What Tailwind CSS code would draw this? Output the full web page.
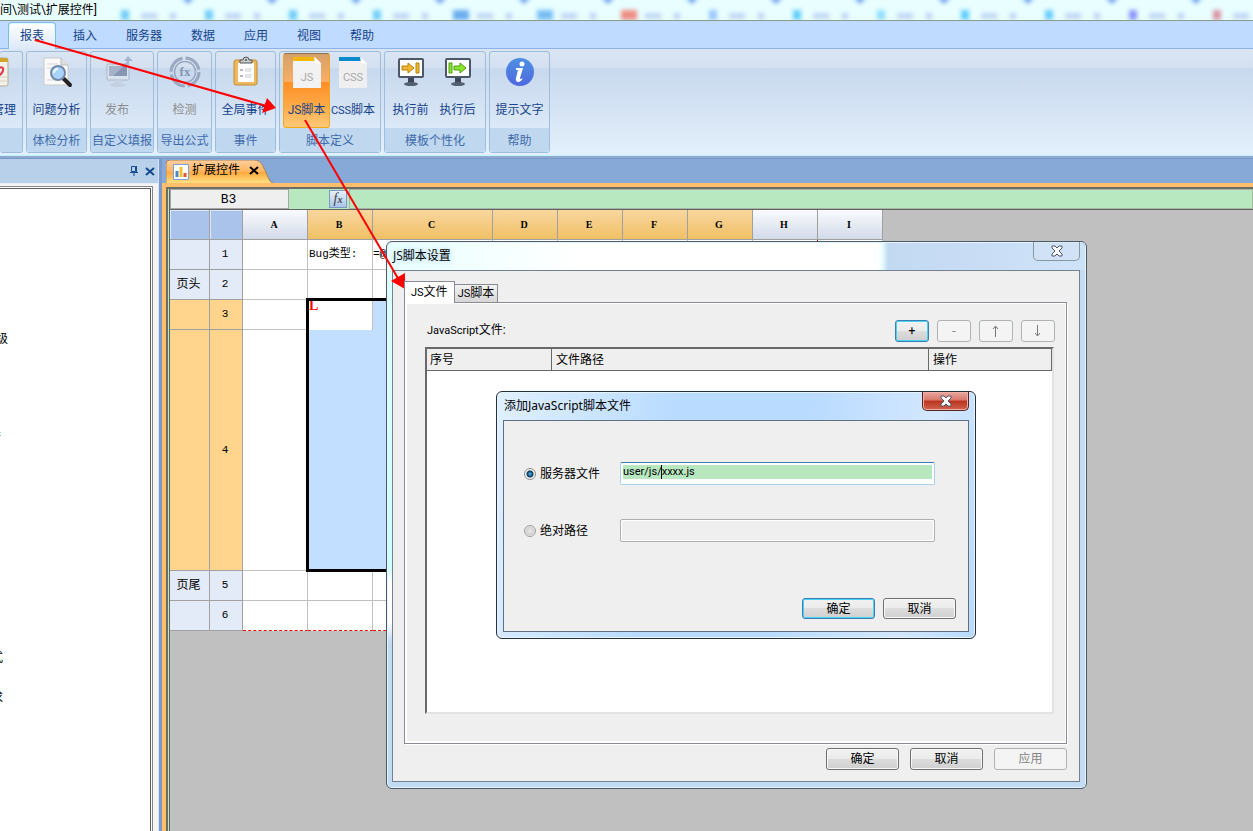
<!DOCTYPE html>
<html lang="zh-CN">
<head>
    <meta charset="UTF-8">
    <meta name="viewport" content="width=device-width, initial-scale=1.0">
    <title>扩展控件</title>
    <script src="https://cdn.jsdelivr.net/npm/@tailwindcss/browser@4"></script>
</head>
<body class="relative flex h-screen flex-col overflow-hidden bg-[#c0c0c0] font-['Roboto','Noto_Sans_CJK_SC',sans-serif] text-xs text-black">

    <!-- Title bar -->
    <header class="relative h-[21px] shrink-0 overflow-hidden border-b border-[#8a9a8c] bg-[#e8feff]">
        <svg class="absolute inset-0 h-full w-full" aria-hidden="true">
            <defs>
                <filter id="soft" x="-50%" y="-50%" width="200%" height="200%"><feGaussianBlur stdDeviation="2"/></filter>
            </defs>
            <g id="glass" filter="url(#soft)" opacity=".85"></g>
        </svg>
        <h1 class="relative leading-5">间\测试\扩展控件]</h1>
    </header>

    <!-- Menu -->
    <nav class="flex h-7 shrink-0 gap-[5px] border-b border-[#8db2e3] bg-[#bfdbff] pl-2 pt-px text-[#15428b]">
        <a href="#" class="h-7 rounded-t border border-b-0 border-[#8db2e3] bg-gradient-to-b from-white to-[#dbe8f8] px-[11px] leading-[26px] shadow-[inset_0_0_0_1px_#d5ffff]">报表</a>
        <a href="#" class="px-3 leading-7">插入</a>
        <a href="#" class="px-3 leading-7">服务器</a>
        <a href="#" class="px-3 leading-7">数据</a>
        <a href="#" class="px-3 leading-7">应用</a>
        <a href="#" class="px-3 leading-7">视图</a>
        <a href="#" class="px-3 leading-7">帮助</a>
    </nav>

    <!-- Ribbon -->
    <div class="flex h-[107px] shrink-0 gap-[3px] border-b border-[#bff4ff] bg-[linear-gradient(#dbe6f4_0,#d3e0f0_19px,#c8d8ed_19px,#e3f0fc_100%)] pb-0.5 pt-0.5 text-[#15428b]">
        <section class="flex w-[23px] flex-col overflow-hidden rounded-[3px] border border-l-0 border-[#9ebcdc]">
            <button class="flex flex-1 flex-col items-end pr-1.5">
                <svg class="mt-1 h-8 w-8" viewBox="0 0 32 32"><rect x="0" y="2" width="24" height="28" rx="2" fill="#f4f1e8" stroke="#b5ab94"/><path d="M0 2h22q2 0 2 2v2H0z" fill="#d0a52c"/><path d="M0 21h23M0 25h23" stroke="#d6d0bf"/><path d="M14 20q6-3 5-8-3-2-5 2" fill="none" stroke="#e23d50" stroke-width="2"/></svg>
                <span class="mt-3 whitespace-nowrap leading-5">管理</span>
            </button>
            <h2 class="h-6 bg-[#c0d7f0]"></h2>
        </section>
        <section class="flex w-[61px] flex-col rounded-[3px] border border-[#9ebcdc]">
            <button class="flex flex-1 flex-col items-center">
                <svg class="mt-1 h-8 w-8" viewBox="0 0 32 32"><path d="M3 2h17l7 7v20H3z" fill="#fafafa" stroke="#c8c8c8"/><path d="M20 2v7h7" fill="#dedede" stroke="#bdbdbd"/><path d="M6 8h11M6 12h7M6 24h7" stroke="#d5d5d5"/><path d="M23 23l6 6" stroke="#222" stroke-width="4" stroke-linecap="round"/><circle cx="17" cy="17" r="7" fill="#a9d3fa" stroke="#7089a8" stroke-width="2"/><path d="M13 17q0-4 4-4" fill="none" stroke="#eef8ff" stroke-width="2"/></svg>
                <span class="mt-3 leading-5">问题分析</span>
            </button>
            <h2 class="h-6 rounded-b bg-[#c0d7f0] text-center leading-[26px] text-[#3e6aaa]">体检分析</h2>
        </section>
        <section class="flex w-16 flex-col rounded-[3px] border border-[#9ebcdc]">
            <button class="flex flex-1 flex-col items-center pr-2.5 text-[#8d8d8d]" disabled>
                <svg class="ml-2.5 mt-1 h-8 w-8" viewBox="0 0 32 32"><rect x="1" y="8" width="22" height="16" rx="1" fill="#d9e2ef" stroke="#a8b6ca"/><path d="M3 10h18v10H3z" fill="#8796b3"/><path d="M3 10h15L7 20H3z" fill="#a5b3ca"/><path d="M9 24h6l1 4H8z" fill="#c6d2e2"/><ellipse cx="12" cy="29" rx="8" ry="2" fill="#c3d0e1"/><path d="M17 10q7 0 6-5h4l-5-5-4 5h3q0 3-4 3z" fill="#a5b5ce"/></svg>
                <span class="mt-3 leading-5">发布</span>
            </button>
            <h2 class="h-6 whitespace-nowrap rounded-b bg-[#c0d7f0] text-center leading-[26px] text-[#3e6aaa]">自定义填报</h2>
        </section>
        <section class="flex w-[55px] flex-col rounded-[3px] border border-[#9ebcdc]">
            <button class="flex flex-1 flex-col items-center text-[#8d8d8d]" disabled>
                <svg class="mt-1 h-8 w-8" viewBox="0 0 32 32"><g fill="none" stroke="#9aa9c0"><circle cx="16" cy="16" r="14" stroke-width="3" stroke-dasharray="19 3"/><circle cx="16" cy="16" r="10.500" stroke-width="1.500"/></g><text x="16" y="20" text-anchor="middle" font-size="13" fill="#8695b0" font-family="Liberation Serif" font-weight="bold">fx</text></svg>
                <span class="mt-3 leading-5">检测</span>
            </button>
            <h2 class="h-6 rounded-b bg-[#c0d7f0] text-center leading-[26px] text-[#3e6aaa]">导出公式</h2>
        </section>
        <section class="flex w-[61px] flex-col rounded-[3px] border border-[#9ebcdc]">
            <button class="flex flex-1 flex-col items-center">
                <svg class="mt-1 h-8 w-8" viewBox="0 0 32 32"><rect x="4" y="4" width="23" height="25" rx="2" fill="#eeb95d" stroke="#c48b33"/><path d="M8 7h16v19H8z" fill="#fff"/><path d="M10 7V4h3q0-3 3-3t3 3h3v3z" fill="#c8ccd1" stroke="#555"/><circle cx="16" cy="4" r="1" fill="#555"/><path d="M10 13h3v2h-3zM10 19h3v2h-3z" fill="#b6bac1"/><path d="M15 13h7M15 15h6M15 19h7M15 21h6" stroke="#c9ccd2"/></svg>
                <span class="mt-3 leading-5">全局事件</span>
            </button>
            <h2 class="h-6 rounded-b bg-[#c0d7f0] text-center leading-[26px] text-[#3e6aaa]">事件</h2>
        </section>
        <section class="flex w-[102px] flex-col rounded-[3px] border border-[#9ebcdc]">
            <div class="flex flex-1 px-[3px] pt-px">
                <button class="flex h-[75px] w-[47px] flex-col items-center rounded-[3px] border border-[#f5a81c] border-t-[#8d7250] bg-[linear-gradient(#d5a06b_0,#f9ae67_38%,#fd8e28_39%,#ffa945_70%,#ffc978_100%)]">
                    <svg class="mt-0.5 h-8 w-8" viewBox="0 0 32 32"><path d="M2 1h22l6 6v25H2z" fill="#f2f2f2"/><path d="M2 1h21l3 4H2z" fill="#f3b60b"/><path d="M23 1l1 6 6 1z" fill="#fff"/><text x="16" y="25" text-anchor="middle" font-size="11" fill="#aaa" font-family="Roboto">JS</text></svg>
                    <span class="mt-3 whitespace-nowrap leading-5">JS脚本</span>
                </button>
                <button class="flex h-[75px] w-[46px] flex-col items-center pt-px">
                    <svg class="mt-0.5 h-8 w-8" viewBox="0 0 32 32"><path d="M2 1h22l6 6v25H2z" fill="#efeff0"/><path d="M2 1h21l3 4H2z" fill="#078acb"/><path d="M23 1l1 6 6 1z" fill="#fff"/><text x="16" y="25" text-anchor="middle" font-size="11" fill="#aaa" font-family="Roboto">CSS</text></svg>
                    <span class="mt-3 whitespace-nowrap leading-5"><span class="text-[11px]">CSS</span>脚本</span>
                </button>
            </div>
            <h2 class="h-6 rounded-b bg-[#c0d7f0] text-center leading-[26px] text-[#3e6aaa]">脚本定义</h2>
        </section>
        <section class="flex w-[102px] flex-col rounded-[3px] border border-[#9ebcdc]">
            <div class="flex flex-1 px-0.5">
                <button class="flex w-[47px] flex-col items-center">
                    <svg class="mt-1 h-8 w-8" viewBox="0 0 32 32"><path d="M13 22h6v5h-6z" fill="#3c4657"/><ellipse cx="16" cy="28" rx="7" ry="2" fill="#536070"/><rect x="4" y="3" width="24" height="18" rx="1" fill="#fff" stroke="#4c5869" stroke-width="2"/><path d="M7 10h6V7l6 5-6 5v-3H7z" fill="#f1b62f" stroke="#b9810f"/><path d="M21 7h3v10h-3z" fill="#f1b62f" stroke="#b9810f"/></svg>
                    <span class="mt-3 leading-5">执行前</span>
                </button>
                <button class="flex w-[47px] flex-col items-center">
                    <svg class="mt-1 h-8 w-8" viewBox="0 0 32 32"><path d="M13 22h6v5h-6z" fill="#3c4657"/><ellipse cx="16" cy="28" rx="7" ry="2" fill="#536070"/><rect x="4" y="3" width="24" height="18" rx="1" fill="#fff" stroke="#4c5869" stroke-width="2"/><path d="M12 10h6V7l6 5-6 5v-3h-6z" fill="#8be52c" stroke="#4a9f10"/><path d="M7 7h3v10H7z" fill="#8be52c" stroke="#4a9f10"/></svg>
                    <span class="mt-3 leading-5">执行后</span>
                </button>
            </div>
            <h2 class="h-6 rounded-b bg-[#c0d7f0] text-center leading-[26px] text-[#3e6aaa]">模板个性化</h2>
        </section>
        <section class="flex w-[61px] flex-col rounded-[3px] border border-[#9ebcdc]">
            <button class="flex flex-1 flex-col items-center">
                <svg class="mt-1 h-8 w-8" viewBox="0 0 32 32"><defs><linearGradient id="info" x2="0" y2="1"><stop stop-color="#4e90e2"/><stop offset="1" stop-color="#4d68df"/></linearGradient></defs><circle cx="16" cy="16" r="14" fill="url(#info)"/><circle cx="18" cy="8" r="2.500" fill="#fff"/><path d="M12 12h7l-3 10q0 2 3 0-2 4-5 4-3-1-2-4l2-8h-2z" fill="#fff"/></svg>
                <span class="mt-3 leading-5">提示文字</span>
            </button>
            <h2 class="h-6 rounded-b bg-[#c0d7f0] text-center leading-[26px] text-[#3e6aaa]">帮助</h2>
        </section>
    </div>

    <div class="flex min-h-0 flex-1 border-t-2 border-[#90a9cc] bg-[#789aca] pt-px">
        <!-- Side panel -->
        <aside class="flex w-[159px] shrink-0 flex-col border-r border-[#d6e4f4] bg-[#f4f4f2] pr-0.5">
            <div class="-mr-0.5 flex h-[25px] items-center justify-end gap-1 border-b border-[#e8eef4] bg-[#b9d0ea] pr-0.5 text-[#15498d]">
                <button aria-label="固定"><svg class="h-3 w-3" viewBox="0 0 12 12" fill="none" stroke="currentColor"><path d="M3.500 1.500h4v5h-4zM8.500 1v6M2 7.500h8M6 8v3"/></svg></button>
                <button aria-label="关闭"><svg class="h-3 w-3" viewBox="0 0 12 12" fill="none" stroke="currentColor" stroke-width="2"><path d="M2 3l8 7M10 3l-8 7"/></svg></button>
            </div>
            <div class="mr-[3px] mt-0.5 flex flex-1 flex-col border-r border-t border-[#85858c] bg-white pr-px pt-px">
                <div class="flex-1 border-r border-t border-[#5d5d5d] pt-[140px] leading-5">
                    <p class="flex w-2 justify-end overflow-hidden">级</p>
                    <p class="mt-[79px] flex w-px justify-end overflow-hidden text-[#15428b]">行</p>
                    <p class="mt-[200px] flex w-[3px] justify-end overflow-hidden">式</p>
                    <p class="mt-5 flex w-[3px] justify-end overflow-hidden">求</p>
                </div>
            </div>
        </aside>

        <!-- Report editor -->
        <main class="ml-[3px] flex min-w-0 flex-1 flex-col">
            <div class="flex h-6 bg-[#86a9d8] pl-1 pt-px">
                <div class="relative flex h-[23px] w-[107px] items-center pl-[7px]">
                    <svg class="absolute inset-0 h-full w-full" viewBox="0 0 107 23" preserveAspectRatio="none" aria-hidden="true"><defs><linearGradient id="tab" x2="0" y2="1"><stop stop-color="#ffd0a0"/><stop offset=".5" stop-color="#ffb55d"/><stop offset=".51" stop-color="#ffa638"/><stop offset="1" stop-color="#ffdf82"/></linearGradient></defs><path d="M0 23V4q0-4 4-4h84q6 0 9 6l5 11q2 6 5 6z" fill="url(#tab)"/><path d="M0 23V4q0-4 4-4h84q6 0 9 6l5 11q2 6 5 6" fill="none" stroke="#ad8156"/></svg>
                    <svg class="relative h-4 w-4" viewBox="0 0 16 16"><path d="M.5.500h15v15H.5z" fill="#fff" stroke="#7ba0dd"/><path d="M4 13V7" stroke="#4c86c5" stroke-width="3"/><path d="M8 13V3" stroke="#f3c22a" stroke-width="3"/><path d="M12 13V9" stroke="#dd5636" stroke-width="3"/></svg>
                    <span class="relative ml-[3px] pb-1">扩展控件</span>
                    <button class="relative ml-2 pb-1" aria-label="关闭标签"><svg class="h-3 w-3" viewBox="0 0 12 12" stroke="#000" stroke-width="2"><path d="M2 3l8 7M10 3l-8 7"/></svg></button>
                </div>
            </div>
            <div class="flex min-h-0 flex-1 flex-col bg-[#ffbe6b] pl-1 pt-1">
                <div class="flex min-h-0 flex-1 flex-col border-l-2 border-t-2 border-[#6d6d66] bg-[#b7e8bf] pl-px">
                    <div class="flex h-[21px] shrink-0 items-center border-b border-l border-[#626262]">
                        <input aria-label="单元格" value="B3" class="h-5 w-[119px] border border-[#a6a6a6] bg-[#efefef] pr-0.5 text-center font-['Liberation_Mono',monospace] text-[13px]">
                        <button class="ml-10 h-[18px] w-[18px] border border-[#7d99c0] bg-gradient-to-b from-[#e8f0fa] to-[#a9c5ea] font-['Liberation_Serif',serif] text-sm italic leading-[15px] text-[#444]">f<span class="text-[10px] font-bold">x</span></button>
                        <input aria-label="公式" class="ml-0.5 h-5 min-w-0 flex-1 border border-[#a6b5a6] bg-[#b7e8bf] px-1">
                    </div>
                    <div class="min-h-0 flex-1 overflow-hidden border-l border-[#626262] bg-[#c0c0c0]">
                        <table class="w-[713px] table-fixed border-separate border-spacing-0 text-center font-['Liberation_Mono','Noto_Sans_CJK_SC',monospace] text-[11px] [&_td]:border-b [&_td]:border-r [&_td]:border-[#c0c0c0] [&_td]:p-0 [&_th]:border-b [&_th]:border-r [&_th]:border-[#a0a0a0] [&_th]:p-0 [&_th]:pr-0.5 [&_th]:font-normal">
                            <colgroup>
                                <col class="w-10"><col class="w-[33px]"><col class="w-[65px]"><col class="w-[65px]"><col class="w-[120px]"><col class="w-[65px]"><col class="w-[65px]"><col class="w-[65px]"><col class="w-[65px]"><col class="w-[65px]"><col class="w-[65px]">
                            </colgroup>
                            <thead>
                                <tr class="h-[30px] font-['Liberation_Serif',serif] text-[10px]">
                                    <th class="bg-[#a9c3ea] shadow-[inset_1px_1px_#dbe7f7]"></th>
                                    <th class="bg-[#a9c3ea] shadow-[inset_1px_1px_#dbe7f7]"></th>
                                    <th class="bg-gradient-to-b from-[#f9fbfd] to-[#d3dbe9]"><b>A</b></th>
                                    <th class="bg-gradient-to-b from-[#f8d69d] to-[#f0c064]"><b>B</b></th>
                                    <th class="bg-gradient-to-b from-[#f8d69d] to-[#f0c064]"><b>C</b></th>
                                    <th class="bg-gradient-to-b from-[#f8d69d] to-[#f0c064]"><b>D</b></th>
                                    <th class="bg-gradient-to-b from-[#f8d69d] to-[#f0c064]"><b>E</b></th>
                                    <th class="bg-gradient-to-b from-[#f8d69d] to-[#f0c064]"><b>F</b></th>
                                    <th class="bg-gradient-to-b from-[#f8d69d] to-[#f0c064]"><b>G</b></th>
                                    <th class="bg-gradient-to-b from-[#f9fbfd] to-[#d3dbe9]"><b>H</b></th>
                                    <th class="bg-gradient-to-b from-[#f9fbfd] to-[#d3dbe9]"><b>I</b></th>
                                </tr>
                            </thead>
                            <tbody class="bg-white">
                                <tr class="h-[30px]">
                                    <th class="bg-[#e4ebf8]"></th><th class="bg-[#e4ebf8]">1</th>
                                    <td></td><td class="whitespace-nowrap pl-px! text-left">Bug类型:</td><td class="text-left">=@</td><td></td><td></td><td></td><td></td><td class="border-r-red-600!"></td><td></td>
                                </tr>
                                <tr class="h-[30px]">
                                    <th class="bg-[#e4ebf8] text-xs">页头</th><th class="bg-[#e4ebf8]">2</th>
                                    <td></td><td></td><td></td><td></td><td></td><td></td><td></td><td></td><td></td>
                                </tr>
                                <tr class="h-[30px]">
                                    <th class="bg-[#ffd48d]"></th><th class="bg-[#ffd48d]">3</th>
                                    <td></td>
                                    <td class="relative border-b-0! pl-px! text-left align-top font-['Liberation_Serif',serif] text-sm leading-3">
                                        <b class="text-[#ff0000]">L</b>
                                        <!-- Selection frame, B3:G4 -->
                                        <div class="pointer-events-none absolute -left-0.5 -top-0.5 h-[274px] w-[448px] border-[3px] border-black"></div>
                                    </td>
                                    <td class="border-[#c3dfff]! bg-[#c3dfff]"></td><td class="bg-[#c3dfff]"></td><td class="bg-[#c3dfff]"></td><td class="bg-[#c3dfff]"></td><td class="bg-[#c3dfff]"></td><td></td><td></td>
                                </tr>
                                <tr class="h-[241px]">
                                    <th class="bg-[#ffd48d]"></th><th class="bg-[#ffd48d]">4</th>
                                    <td></td><td class="border-r-0! bg-[#c3dfff]"></td><td class="bg-[#c3dfff]"></td><td class="bg-[#c3dfff]"></td><td class="bg-[#c3dfff]"></td><td class="bg-[#c3dfff]"></td><td class="bg-[#c3dfff]"></td><td></td><td></td>
                                </tr>
                                <tr class="h-[30px]">
                                    <th class="bg-[#e4ebf8] text-xs">页尾</th><th class="bg-[#e4ebf8]">5</th>
                                    <td></td><td></td><td></td><td></td><td></td><td></td><td></td><td></td><td></td>
                                </tr>
                                <tr class="h-[30px] [&_td]:border-b-[#ff0000]! [&_td]:[border-bottom-style:dashed]!">
                                    <th class="bg-[#e4ebf8]"></th><th class="bg-[#e4ebf8]">6</th>
                                    <td></td><td></td><td></td><td></td><td></td><td></td><td></td><td></td><td></td>
                                </tr>
                            </tbody>
                        </table>
                    </div>
                </div>
            </div>
        </main>
    </div>

    <!-- JS script settings -->
    <div role="dialog" aria-labelledby="settingsTitle" class="absolute left-[386px] top-[241px] flex h-[548px] w-[701px] flex-col rounded-md border border-[#4b5b68] bg-[linear-gradient(#dffdff_0,#cff_325px,#fff_340px,#fff_380px,#c2dbf4_400px)] pb-1.5 pl-[5px] pr-1.5 shadow-[inset_0_0_0_1px_#e6f4ff]">
        <div class="absolute inset-y-px right-px w-[5px] bg-[#c5dcf4]"></div>
        <div class="absolute inset-x-px top-px h-[27px] rounded-t-md bg-[linear-gradient(90deg,#e8ffff_0,#fff_190px,#fff_490px,#e8ffff_494px,#c3d9f2_500px,#cfe3f8_100%)]"></div>
        <div class="relative flex h-7 shrink-0 items-start justify-between">
            <h2 id="settingsTitle" class="pl-px font-['Open_Sans','Noto_Sans_CJK_SC',sans-serif] leading-7 [text-shadow:0_0_6px_#9dc5ee]">JS脚本设置</h2>
            <button class="flex h-[19px] w-[47px] items-center justify-center rounded-b-[5px] border border-t-0 border-[#8997a5] bg-[#d3e3f5]/60" aria-label="关闭">
                <svg class="h-3 w-3" viewBox="0 0 12 12"><path d="M1 1h3l2 2 2-2h3v2L8 6l3 3v2H8L6 9l-2 2H1V9l3-3-3-3z" fill="#fff" stroke="#4b5568"/></svg>
            </button>
        </div>
        <div class="relative flex flex-1 flex-col border border-[#73828e] bg-[#efefef] pb-[11px] pl-[11px] pr-3 pt-2.5">
            <div class="z-10 flex items-end">
                <button class="-mb-px h-[22px] border border-b-0 border-[#8b8b97] bg-white px-1.5"><span class="text-[11px]">JS</span>文件</button>
                <button class="h-[18px] border border-b-0 border-l-0 border-[#8b8b97] bg-gradient-to-b from-[#f3f3f3] to-[#d6d6d6] px-[3px]"><span class="text-[11px]">JS</span>脚本</button>
            </div>
            <div class="flex flex-1 flex-col border border-[#8b8b97] bg-[#efefef] px-5 pb-[29px] pt-3 shadow-[inset_2px_1px_#fff,inset_-1px_-2px_#fff,1px_1px_#fff]">
                <div class="-mr-[9px] flex h-8 items-center gap-2 pl-0.5">
                    <h3 class="mr-auto pb-0.5"><span class="text-[11px]">JavaScript</span>文件:</h3>
                    <button class="h-[22px] w-[34px] rounded-[3px] border border-[#3c7fb1] bg-[linear-gradient(#f2f2f2,#ebebeb_50%,#ddd_50%,#cfcfcf)] shadow-[inset_0_0_0_1px_#48d3f5]" aria-label="添加">+</button>
                    <button class="h-[22px] w-[34px] rounded-[3px] border border-[#adb2b5] bg-[#f4f4f4] text-[#838383]" disabled aria-label="删除">-</button>
                    <button class="flex h-[22px] w-[34px] items-center justify-center rounded-[3px] border border-[#adb2b5] bg-[#f4f4f4]" disabled aria-label="上移"><svg class="h-3 w-3" viewBox="0 0 12 12" fill="none" stroke="#777"><path d="M5.500 12V1.500M3 4l2.500-3L8 4"/></svg></button>
                    <button class="flex h-[22px] w-[34px] items-center justify-center rounded-[3px] border border-[#adb2b5] bg-[#f4f4f4]" disabled aria-label="下移"><svg class="h-3 w-3" viewBox="0 0 12 12" fill="none" stroke="#777"><path d="M5.500 0v10.500M3 8l2.500 3L8 8"/></svg></button>
                </div>
                <div class="-mr-2 flex-1 border-2 border-b-[#e3e3e3] border-l-[#696969] border-r-[#e3e3e3] border-t-[#696969] bg-white">
                    <table class="w-full table-fixed border-separate border-spacing-0 text-left">
                        <thead>
                            <tr class="h-[22px] bg-[#efefef]">
                                <th class="w-[125px] border-b border-r border-[#696969] pl-[3px] font-normal">序号</th>
                                <th class="border-b border-r border-[#696969] pl-1 font-normal">文件路径</th>
                                <th class="w-[123px] border-b border-r border-[#696969] pl-1 font-normal">操作</th>
                            </tr>
                        </thead>
                        <tbody></tbody>
                    </table>
                </div>
            </div>
            <div class="mt-1 flex justify-end gap-[11px]">
                <button class="h-[22px] w-[73px] rounded-[3px] border border-[#707070] bg-[linear-gradient(#f2f2f2,#ebebeb_50%,#ddd_50%,#cfcfcf)] shadow-[inset_0_0_0_1px_#f8f8f8]">确定</button>
                <button class="h-[22px] w-[73px] rounded-[3px] border border-[#707070] bg-[linear-gradient(#f2f2f2,#ebebeb_50%,#ddd_50%,#cfcfcf)] shadow-[inset_0_0_0_1px_#f8f8f8]">取消</button>
                <button class="h-[22px] w-[73px] rounded-[3px] border border-[#adb2b5] bg-[#f4f4f4] text-[#838383]" disabled>应用</button>
            </div>
        </div>
    </div>

    <!-- Add file -->
    <div role="dialog" aria-labelledby="addTitle" class="absolute left-[496px] top-[391px] flex h-[248px] w-[480px] flex-col rounded-md border border-[#25303c] bg-[linear-gradient(100deg,#e0f0ff_0,#b9dbff_35%,#b9dbff_60%,#d3e7ff_85%,#b9dbff_100%)] px-1.5 pb-1.5 shadow-[inset_0_0_0_1px_#e6f4ff]">
        <div class="flex h-7 shrink-0 items-start justify-between">
            <h2 id="addTitle" class="pl-px font-['Noto_Sans','Noto_Sans_CJK_SC',sans-serif] leading-7">添加JavaScript脚本文件</h2>
            <button class="flex h-[19px] w-[47px] items-center justify-center rounded-b-[5px] border border-t-0 border-[#55221f] bg-[linear-gradient(#eaa79f,#d9786c_45%,#b9341f_50%,#d2624e)] shadow-[inset_0_0_0_1px_#efb0a8]" aria-label="关闭">
                <svg class="h-3 w-3" viewBox="0 0 12 12"><path d="M1 1h3l2 2 2-2h3v2L8 6l3 3v2H8L6 9l-2 2H1V9l3-3-3-3z" fill="#fff" stroke="#4b5568"/></svg>
            </button>
        </div>
        <form class="flex flex-1 flex-col border border-[#5f6f80] bg-[#efefef] pb-3 pl-5 pr-3 pt-[41px]">
            <div class="flex h-[23px] items-center pr-[21px]">
                <input type="radio" id="server" name="source" checked class="h-3 w-3 appearance-none rounded-full border border-[#8e8f8f] bg-[radial-gradient(circle,#5cc5ee_0,#1b5f8e_2px,#10344f_3px,#f4f4f4_4px)]">
                <label for="server" class="w-[84px] pl-1">服务器文件</label>
                <div class="relative h-[23px] flex-1 rounded-[2px] border border-[#a9d0e8] border-t-[#3d7bad] bg-white p-0.5">
                    <input aria-label="服务器文件路径" value="user/js/xxxx.js" class="block h-[14px] w-full bg-[#b7e8bf] text-[11px] leading-[14px]">
                    <i class="absolute left-10 top-0.5 h-[14px] w-px bg-black"></i>
                </div>
            </div>
            <div class="mt-[34px] flex h-[23px] items-center pr-[21px]">
                <input type="radio" id="absolute" name="source" class="h-3 w-3 appearance-none rounded-full border border-[#9b9b9b] bg-[radial-gradient(circle,#e8e8e8_0,#d0d0d0_4px,#f4f4f4_5px)]">
                <label for="absolute" class="w-[84px] pl-1">绝对路径</label>
                <input aria-label="绝对路径" disabled class="h-[23px] min-w-0 flex-1 rounded-[2px] border border-[#afafaf] bg-[#efefef] shadow-[inset_0_0_0_1px_#fff]">
            </div>
            <div class="mt-auto flex justify-end gap-2">
                <button type="button" class="h-[21px] w-[73px] rounded-[3px] border border-[#3c7fb1] bg-[linear-gradient(#f2f2f2,#ebebeb_50%,#ddd_50%,#cfcfcf)] shadow-[inset_0_0_0_1px_#48d3f5]">确定</button>
                <button type="button" class="h-[21px] w-[73px] rounded-[3px] border border-[#707070] bg-[linear-gradient(#f2f2f2,#ebebeb_50%,#ddd_50%,#cfcfcf)] shadow-[inset_0_0_0_1px_#f8f8f8]">取消</button>
            </div>
        </form>
    </div>

    <!-- Guide arrows -->
    <svg class="pointer-events-none absolute left-0 top-0" width="420" height="300" aria-hidden="true">
        <g stroke="red" stroke-width="2"><path d="M35 40L266 106M305 120L399 280"/></g>
        <path d="M276 108l-9-10-5 15zM405 289l-14-8 14-8z" fill="red"/>
    </svg>

    <script>
        // Blurred shapes behind the glass title bar, one group per desktop item
        const glass = document.getElementById('glass');
        const colors = ['#5cc4f6', '#5cc4f6', '#5cc4f6', '#5cc4f6', '#559fec', '#65b3f2', '#f07a70', '#8bbdff', '#49c4fa', '#80d8ff', '#49c4fa', '#55c5fa', '#7a84ff', '#d98298'];

        glass.innerHTML = colors.map((color, i) => {
            const x = 125 + i * 84;
            const w = i >= 4 && i <= 6 ? 16 : 8;
            return `
                <rect x="${x - w / 2}" y="10" width="${w}" height="10" fill="${color}"/>
                <rect x="${x + 16}" y="13" width="16" height="6" fill="#bcd0f4"/>
                <rect x="${x + 45}" y="13" width="6" height="6" fill="#b3c8f4"/>
                <path d="M${x + 56} -3h14l-7 7z" fill="#5b8de8"/>
            `;
        }).join('');
    </script>
</body>
</html>
